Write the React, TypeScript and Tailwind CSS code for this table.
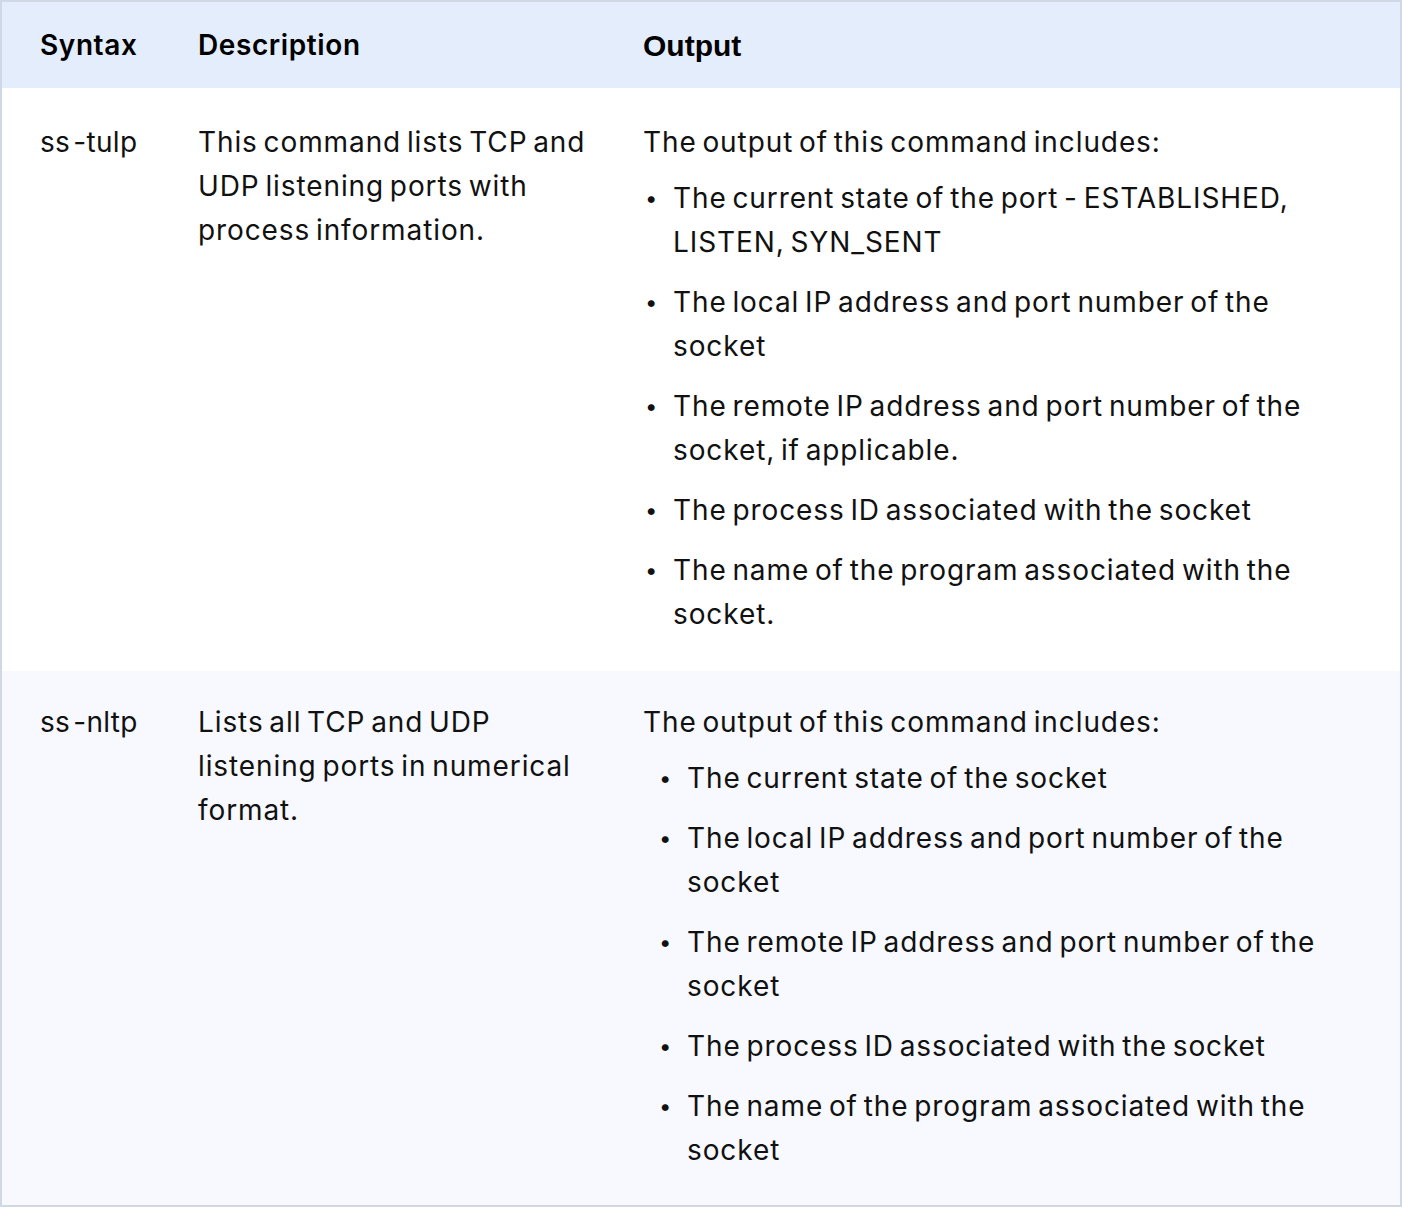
import React from "react";

type Row = {
  syntax: string;
  description: string;
  intro: string;
  items: string[];
  listIndent: string;
  spacing: string;
  bg: string;
};

const rows: Row[] = [
  {
    syntax: "ss -tulp",
    description: "This command lists TCP and UDP listening ports with process information.",
    intro: "The output of this command includes:",
    items: [
      "The current state of the port - ESTABLISHED, LISTEN, SYN_SENT",
      "The local IP address and port number of the socket",
      "The remote IP address and port number of the socket, if applicable.",
      "The process ID associated with the socket",
      "The name of the program associated with the socket.",
    ],
    listIndent: "pl-[2px]",
    spacing: "pt-[32px] pb-[35px]",
    bg: "bg-white",
  },
  {
    syntax: "ss -nltp",
    description: "Lists all TCP and UDP listening ports in numerical format.",
    intro: "The output of this command includes:",
    items: [
      "The current state of the socket",
      "The local IP address and port number of the socket",
      "The remote IP address and port number of the socket",
      "The process ID associated with the socket",
      "The name of the program associated with the socket",
    ],
    listIndent: "pl-[16px]",
    spacing: "pt-[29px] pb-[33px]",
    bg: "bg-[#f7f9fe]",
  },
];

const OutputCell = ({ row }: { row: Row }) => (
  <div>
    <p>{row.intro}</p>
    <ul className={`mt-3 flex flex-col gap-4 ${row.listIndent}`}>
      {row.items.map((item) => (
        <li key={item} className="flex">
          <span className="w-[28px] shrink-0 text-[22px]">•</span>
          <span>{item}</span>
        </li>
      ))}
    </ul>
  </div>
);

export default function App() {
  return (
    <div className="w-[1402px] bg-white font-['Inter',sans-serif] text-[#111]">
      <div className="border-2 border-[#cfd8e4]">
        <div className="flex h-[86px] items-center bg-[#e3edfb] text-[28px] font-semibold tracking-[0.6px] text-black">
          <div className="w-[156px] pl-[38px]">Syntax</div>
          <div className="w-[445px] pl-10">Description</div>
          <div className="flex-1 pl-10 font-['Liberation_Sans',sans-serif] text-[30px] font-bold tracking-normal">
            Output
          </div>
        </div>
        {rows.map((row) => (
          <div
            key={row.syntax}
            className={`flex text-[28px] leading-[44px] tracking-[0.9px] [word-spacing:-3px] ${row.spacing} ${row.bg}`}
          >
            <div className="w-[156px] shrink-0 pl-[38px] tracking-[0.3px] [word-spacing:-5px]">{row.syntax}</div>
            <div className="w-[445px] shrink-0 pl-10 pr-4">{row.description}</div>
            <div className="flex-1 pl-10 pr-10">
              <OutputCell row={row} />
            </div>
          </div>
        ))}
      </div>
    </div>
  );
}
